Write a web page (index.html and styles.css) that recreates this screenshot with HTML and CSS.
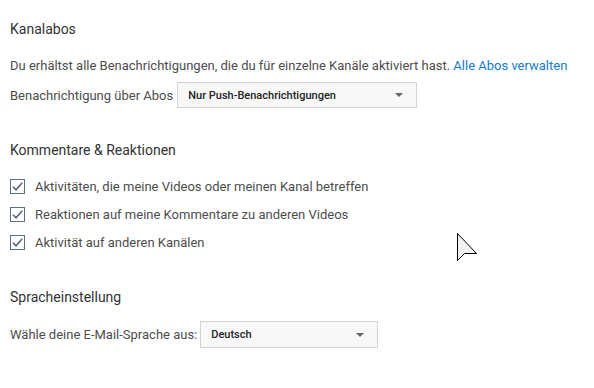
FILE: index.html
```html
<!DOCTYPE html>
<html>

<head>
    <title>Benachrichtigungen</title>
    <link rel="stylesheet" href="styles.css">
</head>

<body>
    <div class="section">
        <h2 class="sectionTitle">Kanalabos</h2>
        <p class="desc">Du erhältst alle Benachrichtigungen, die du für einzelne Kanäle aktiviert hast. <a href="#" class="link">Alle Abos verwalten</a></p>
        <div class="selectRow">
            <span class="selectLabel">Benachrichtigung über Abos</span>
            <div class="selectBox subsSelect">
                <span>Nur Push-Benachrichtigungen</span>
                <span class="arrow"></span>
            </div>
        </div>
    </div>

    <div class="section comments">
        <h2 class="sectionTitle">Kommentare &amp; Reaktionen</h2>
        <ul class="checkList">
            <li class="checkRow">
                <span class="checkBox"><svg width="13" height="13" viewBox="0 0 13 13"><path d="M2 6.8 L5 9.8 L11.2 2.8" fill="none" stroke="#4f6078" stroke-width="1.5"/></svg></span>
                Aktivitäten, die meine Videos oder meinen Kanal betreffen
            </li>
            <li class="checkRow">
                <span class="checkBox"><svg width="13" height="13" viewBox="0 0 13 13"><path d="M2 6.8 L5 9.8 L11.2 2.8" fill="none" stroke="#4f6078" stroke-width="1.5"/></svg></span>
                Reaktionen auf meine Kommentare zu anderen Videos
            </li>
            <li class="checkRow">
                <span class="checkBox"><svg width="13" height="13" viewBox="0 0 13 13"><path d="M2 6.8 L5 9.8 L11.2 2.8" fill="none" stroke="#4f6078" stroke-width="1.5"/></svg></span>
                Aktivität auf anderen Kanälen
            </li>
        </ul>
    </div>

    <div class="section language">
        <h2 class="sectionTitle">Spracheinstellung</h2>
        <div class="selectRow langRow">
            <span class="selectLabel">Wähle deine E-Mail-Sprache aus:</span>
            <div class="selectBox langSelect">
                <span>Deutsch</span>
                <span class="arrow"></span>
            </div>
        </div>
    </div>

    <!-- Mauszeiger aus dem Screenshot -->
    <svg class="cursor" width="22" height="30" viewBox="0 0 22 30">
        <polygon points="0.5,0.5 0.5,27.5 7.5,20.5 19.5,20.5" fill="#f2f2f2" stroke="#000" stroke-width="1"/>
    </svg>
</body>

</html>
```

FILE: styles.css
```css
body {
    margin: 0;
    padding: 20px 10px 0 10px;
    background: #fff;
    color: #4d4d4d;
    font-family: Roboto, Arial, sans-serif;
    font-size: 13px;
    position: relative;
    min-height: 388px;
    box-sizing: border-box;
}

.sectionTitle {
    margin: 0;
    font-size: 14px;
    line-height: 18px;
    font-weight: 400;
    color: #333;
}

.desc {
    margin: 19px 0 0 0;
    line-height: 17px;
}

.link {
    color: #167ac6;
    text-decoration: none;
}

.selectRow {
    display: flex;
    align-items: center;
    gap: 4px;
    margin-top: 8px;
}

.selectBox {
    display: flex;
    align-items: center;
    justify-content: space-between;
    height: 26px;
    padding: 0 13px 0 10px;
    box-sizing: border-box;
    border: 1px solid #d3d3d3;
    background: #f8f8f8;
    color: #222;
    font-size: 11px;
    font-weight: 500;
}

.subsSelect {
    width: 240px;
}

.langSelect {
    width: 178px;
    height: 27px;
}

.arrow {
    width: 0;
    height: 0;
    border-left: 4px solid transparent;
    border-right: 4px solid transparent;
    border-top: 4px solid #666;
}

.comments {
    margin-top: 33px;
}

.checkList {
    list-style: none;
    margin: 13px 0 0 0;
    padding: 0;
}

.checkRow {
    display: flex;
    align-items: center;
    gap: 10px;
    height: 28px;
}

.checkBox {
    width: 15px;
    height: 15px;
    box-sizing: border-box;
    border: 1px solid #5d6d84;
    display: flex;
    align-items: center;
    justify-content: center;
}

.language {
    margin-top: 32px;
}

.langRow {
    margin-top: 15px;
    gap: 3px;
}

.cursor {
    position: absolute;
    left: 457px;
    top: 233px;
}
```
